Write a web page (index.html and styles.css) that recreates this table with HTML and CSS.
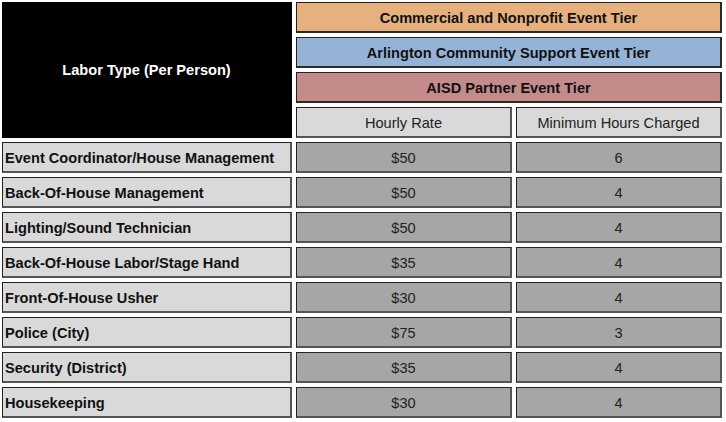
FILE: index.html
```html
<!DOCTYPE html>
<html>
<head>
<meta charset="utf-8">
<link rel="stylesheet" href="styles.css">
</head>
<body>
<div class="table">
  <div class="cell head-main">Labor Type (Per Person)</div>
  <div class="cell tier tier-orange">Commercial and Nonprofit Event Tier</div>
  <div class="cell tier tier-blue">Arlington Community Support Event Tier</div>
  <div class="cell tier tier-red">AISD Partner Event Tier</div>
  <div class="cell sub">Hourly Rate</div>
  <div class="cell sub">Minimum Hours Charged</div>

  <div class="cell label">Event Coordinator/House Management</div>
  <div class="cell val">$50</div>
  <div class="cell val">6</div>

  <div class="cell label">Back-Of-House Management</div>
  <div class="cell val">$50</div>
  <div class="cell val">4</div>

  <div class="cell label">Lighting/Sound Technician</div>
  <div class="cell val">$50</div>
  <div class="cell val">4</div>

  <div class="cell label">Back-Of-House Labor/Stage Hand</div>
  <div class="cell val">$35</div>
  <div class="cell val">4</div>

  <div class="cell label">Front-Of-House Usher</div>
  <div class="cell val">$30</div>
  <div class="cell val">4</div>

  <div class="cell label">Police (City)</div>
  <div class="cell val">$75</div>
  <div class="cell val">3</div>

  <div class="cell label">Security (District)</div>
  <div class="cell val">$35</div>
  <div class="cell val">4</div>

  <div class="cell label">Housekeeping</div>
  <div class="cell val">$30</div>
  <div class="cell val">4</div>
</div>
</body>
</html>
```

FILE: styles.css
```css
html, body {
  margin: 0;
  padding: 0;
  background: #ffffff;
}

body {
  font-family: "Liberation Sans", Arial, sans-serif;
  font-size: 14.6px;
  color: #1a1a1a;
}

.table {
  display: grid;
  grid-template-columns: 290px 216px 206px;
  grid-auto-rows: 31px;
  gap: 4px;
  padding: 2px;
}

.cell {
  box-sizing: border-box;
  display: flex;
  align-items: center;
  justify-content: center;
  padding-top: 1px;
  border-top: 1px solid #222;
  border-left: 1px solid #222;
  border-right: 2px solid #555;
  border-bottom: 2px solid #555;
  white-space: nowrap;
}

.head-main {
  grid-column: 1;
  grid-row: 1 / span 4;
  background: #000;
  color: #fff;
  font-weight: bold;
  border-color: #000;
}

.tier {
  grid-column: 2 / span 2;
  font-weight: bold;
  color: #111;
  border-right-color: #2a2a2a;
  border-bottom-color: #2a2a2a;
}

.tier-orange { background: #e6b17e; }
.tier-blue { background: #95b3d7; }
.tier-red { background: #c48b8b; }

.sub {
  background: #d9d9d9;
  color: #222;
}

.label {
  background: #d9d9d9;
  font-weight: bold;
  justify-content: flex-start;
  padding-left: 2px;
  color: #111;
}

.val {
  background: #a6a6a6;
  color: #222;
}
```
